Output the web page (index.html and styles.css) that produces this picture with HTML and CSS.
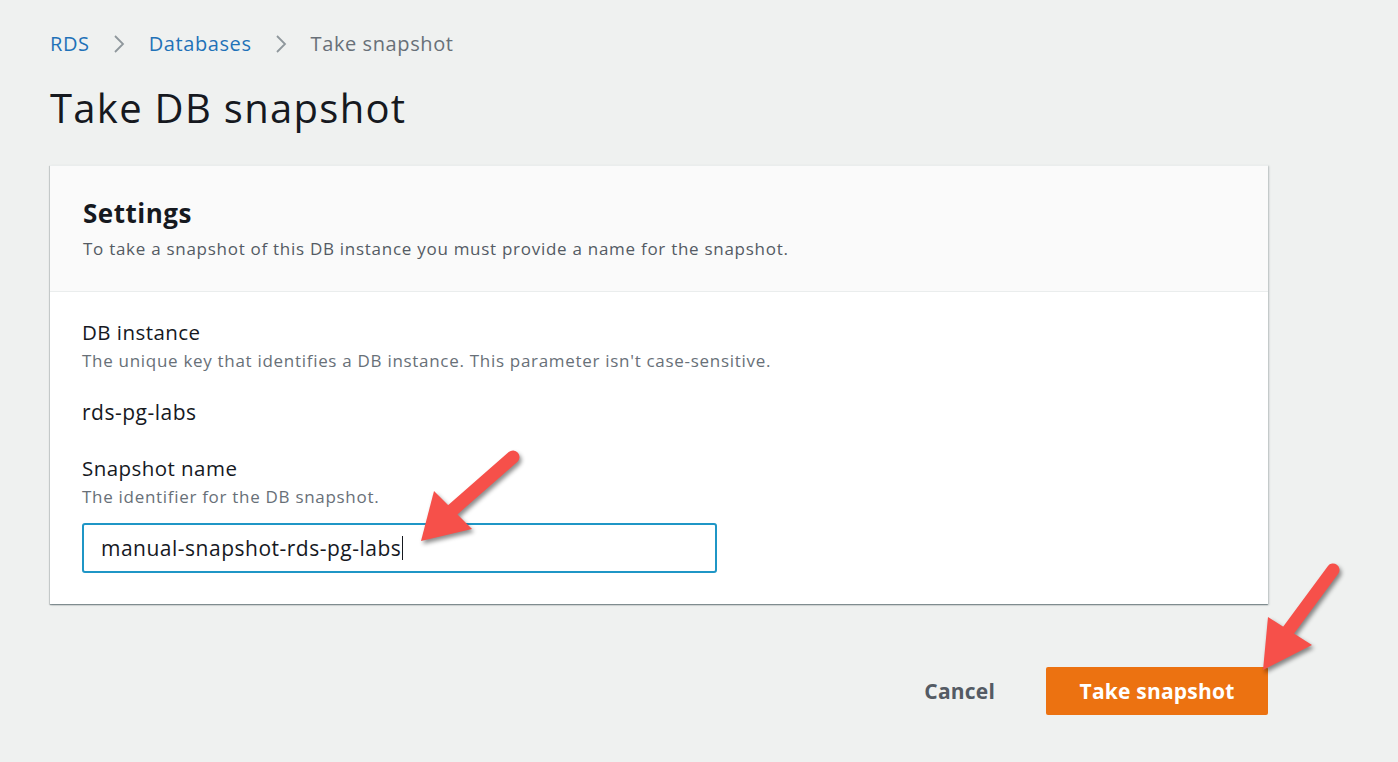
FILE: index.html
```html
<!DOCTYPE html>
<html lang="en">
<head>
<meta charset="utf-8">
<title>Take DB snapshot</title>
<link rel="stylesheet" href="styles.css">
</head>
<body>
<div class="page">
  <nav class="breadcrumbs">
    <a class="crumb-link" href="#">RDS</a>
    <svg class="chev" width="14" height="22" viewBox="0 0 14 22"><path d="M3 3 L11 11 L3 19" fill="none" stroke="#8f979c" stroke-width="1.8"/></svg>
    <a class="crumb-link" href="#">Databases</a>
    <svg class="chev" width="14" height="22" viewBox="0 0 14 22"><path d="M3 3 L11 11 L3 19" fill="none" stroke="#8f979c" stroke-width="1.8"/></svg>
    <span class="crumb-current">Take snapshot</span>
  </nav>
  <h1 class="title">Take DB snapshot</h1>

  <section class="card">
    <header class="card-header">
      <h2 class="card-title">Settings</h2>
      <p class="card-desc">To take a snapshot of this DB instance you must provide a name for the snapshot.</p>
    </header>
    <div class="card-body">
      <div class="field">
        <div class="label">DB instance</div>
        <div class="hint">The unique key that identifies a DB instance. This parameter isn't case-sensitive.</div>
        <div class="value">rds-pg-labs</div>
      </div>
      <div class="field">
        <div class="label">Snapshot name</div>
        <div class="hint">The identifier for the DB snapshot.</div>
        <div class="input"><span>manual-snapshot-rds-pg-labs</span><span class="caret"></span></div>
      </div>
    </div>
  </section>

  <div class="actions">
    <button class="btn-link">Cancel</button>
    <button class="btn-primary">Take snapshot</button>
  </div>
</div>

<svg class="annotations" width="1398" height="762" viewBox="0 0 1398 762">
  <g class="arrow">
    <line x1="513" y1="457" x2="448" y2="514" stroke="#f6504a" stroke-width="13" stroke-linecap="round"/>
    <polygon points="421,541 434,491 472,529" fill="#f6504a"/>
  </g>
  <g class="arrow">
    <line x1="1333" y1="570" x2="1285" y2="635" stroke="#f6504a" stroke-width="13" stroke-linecap="round"/>
    <polygon points="1263,670 1268,617 1312,645" fill="#f6504a"/>
  </g>
</svg>
</body>
</html>
```

FILE: styles.css
```css
* { box-sizing: border-box; }

html, body {
  margin: 0;
  padding: 0;
}

body {
  background: #eff1f0;
  font-family: "Open Sans", "Noto Sans", "Liberation Sans", sans-serif;
  color: #16191f;
  width: 1398px;
  height: 762px;
  overflow: hidden;
  position: relative;
}

.page {
  padding: 30px 0 0 50px;
  width: 1268px;
}

.breadcrumbs {
  display: flex;
  align-items: center;
  height: 28px;
  font-size: 20px;
  line-height: 28px;
  letter-spacing: 0.6px;
}

.crumb-link {
  color: #1f72b8;
  text-decoration: none;
}

.chev {
  margin: 0 23px 0 22px;
}

.crumb-current {
  color: #687078;
}

.title {
  margin: 26px 0 0 0;
  font-size: 40px;
  line-height: 48px;
  font-weight: 400;
  letter-spacing: 1.3px;
  color: #16191f;
}

.card {
  margin-top: 33px;
  background: #fff;
  border-top: 1px solid #eaeded;
  box-shadow: 0 1px 1px 0 rgba(0, 28, 36, 0.3), 1px 1px 2px 0 rgba(0, 28, 36, 0.2), -1px 1px 1px 0 rgba(0, 28, 36, 0.12);
}

.card-header {
  background: #fafafa;
  border-bottom: 1px solid #eaeded;
  padding: 31px 32px 31px 33px;
}

.card-title {
  margin: 0;
  font-size: 26px;
  line-height: 32px;
  font-weight: 700;
  letter-spacing: 0.5px;
}

.card-desc {
  margin: 9px 0 0 0;
  font-size: 17px;
  line-height: 22px;
  letter-spacing: 0.72px;
  color: #545b64;
}

.card-body {
  padding: 27px 32px 31px 32px;
}

.field + .field {
  margin-top: 30px;
}

.label {
  font-size: 20.5px;
  line-height: 26px;
  letter-spacing: 0.45px;
  color: #16191f;
}

.hint {
  margin-top: 6px;
  font-size: 17px;
  line-height: 20px;
  letter-spacing: 0.7px;
  color: #687078;
}

.value {
  margin-top: 28px;
  font-size: 21px;
  line-height: 26px;
  letter-spacing: 0.5px;
}

.input {
  margin-top: 16px;
  width: 635px;
  height: 50px;
  border: 2px solid #1f96c6;
  border-radius: 3px;
  padding: 0 17px;
  display: flex;
  align-items: center;
  font-size: 21px;
  letter-spacing: 0.5px;
  color: #16191f;
}

.caret {
  display: inline-block;
  width: 1px;
  height: 24px;
  background: #16191f;
  margin-left: 1px;
}

.actions {
  display: flex;
  justify-content: flex-end;
  align-items: center;
  margin-top: 63px;
  gap: 51px;
}

.btn-link {
  background: none;
  border: none;
  padding: 0;
  font-family: inherit;
  font-size: 21px;
  font-weight: 700;
  letter-spacing: 0.2px;
  color: #545b64;
}

.btn-primary {
  width: 222px;
  height: 48px;
  background: #ec7211;
  border: none;
  border-radius: 2px;
  font-family: inherit;
  font-size: 21px;
  font-weight: 700;
  letter-spacing: 0.2px;
  color: #fff;
}

.annotations {
  position: absolute;
  left: 0;
  top: 0;
  pointer-events: none;
}

.arrow {
  filter: drop-shadow(2px 3px 2px rgba(0, 0, 0, 0.45));
}
```
